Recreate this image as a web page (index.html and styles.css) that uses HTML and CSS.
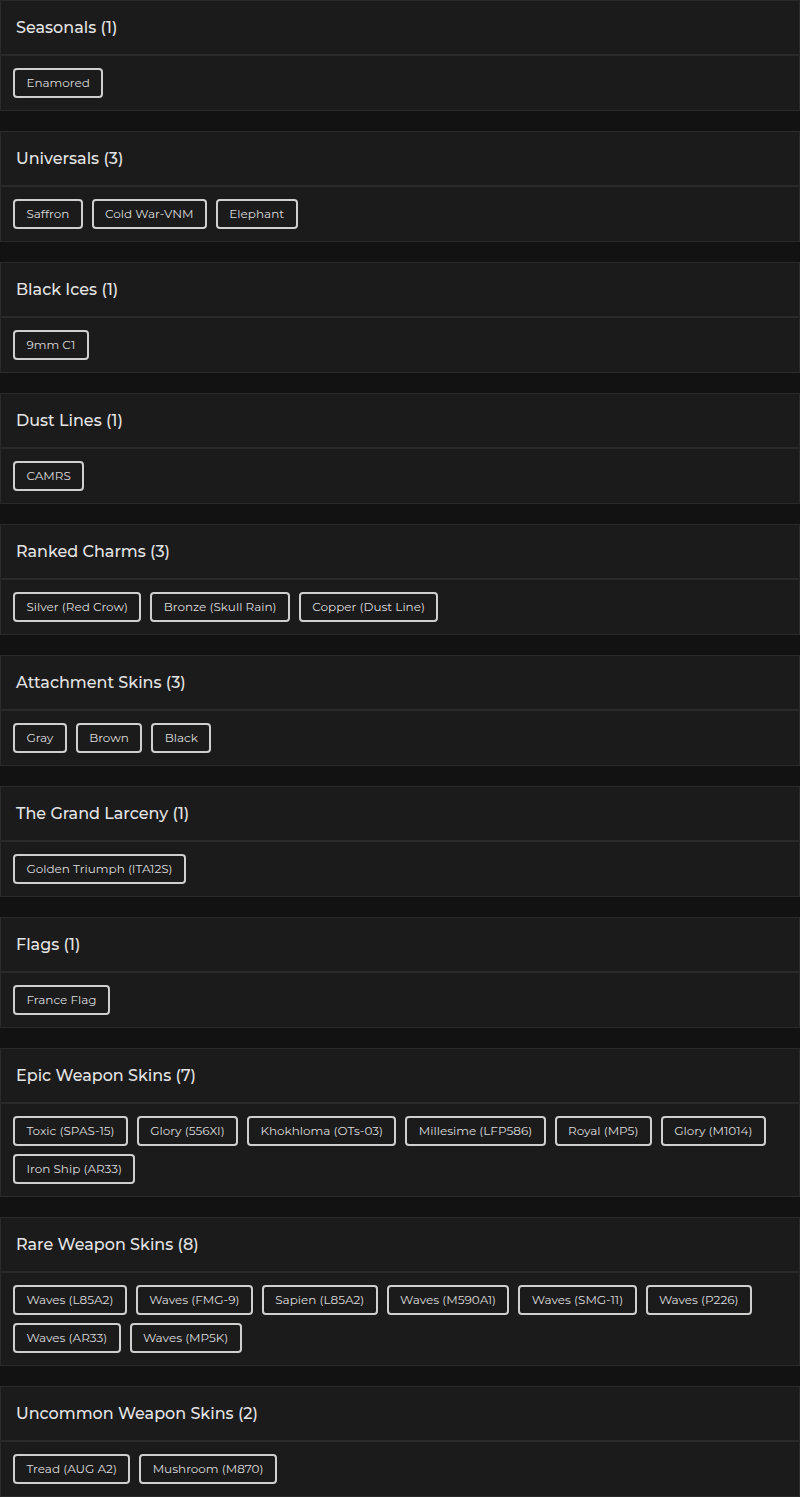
FILE: index.html
```html
<!DOCTYPE html>
<html>
<head>
<meta charset="utf-8">
<link rel="stylesheet" href="styles.css">
</head>
<body>
<div class="list">
  <section class="card">
    <h2 class="card-head">Seasonals (1)</h2>
    <div class="card-body">
      <span class="tag">Enamored</span>
    </div>
  </section>
  <section class="card">
    <h2 class="card-head">Universals (3)</h2>
    <div class="card-body">
      <span class="tag">Saffron</span>
      <span class="tag">Cold War-VNM</span>
      <span class="tag">Elephant</span>
    </div>
  </section>
  <section class="card">
    <h2 class="card-head">Black Ices (1)</h2>
    <div class="card-body">
      <span class="tag">9mm C1</span>
    </div>
  </section>
  <section class="card">
    <h2 class="card-head">Dust Lines (1)</h2>
    <div class="card-body">
      <span class="tag">CAMRS</span>
    </div>
  </section>
  <section class="card">
    <h2 class="card-head">Ranked Charms (3)</h2>
    <div class="card-body">
      <span class="tag">Silver (Red Crow)</span>
      <span class="tag">Bronze (Skull Rain)</span>
      <span class="tag">Copper (Dust Line)</span>
    </div>
  </section>
  <section class="card">
    <h2 class="card-head">Attachment Skins (3)</h2>
    <div class="card-body">
      <span class="tag">Gray</span>
      <span class="tag">Brown</span>
      <span class="tag">Black</span>
    </div>
  </section>
  <section class="card">
    <h2 class="card-head">The Grand Larceny (1)</h2>
    <div class="card-body">
      <span class="tag">Golden Triumph (ITA12S)</span>
    </div>
  </section>
  <section class="card">
    <h2 class="card-head">Flags (1)</h2>
    <div class="card-body">
      <span class="tag">France Flag</span>
    </div>
  </section>
  <section class="card">
    <h2 class="card-head">Epic Weapon Skins (7)</h2>
    <div class="card-body">
      <span class="tag">Toxic (SPAS-15)</span>
      <span class="tag">Glory (556XI)</span>
      <span class="tag">Khokhloma (OTs-03)</span>
      <span class="tag">Millesime (LFP586)</span>
      <span class="tag">Royal (MP5)</span>
      <span class="tag">Glory (M1014)</span>
      <span class="tag">Iron Ship (AR33)</span>
    </div>
  </section>
  <section class="card">
    <h2 class="card-head">Rare Weapon Skins (8)</h2>
    <div class="card-body">
      <span class="tag">Waves (L85A2)</span>
      <span class="tag">Waves (FMG-9)</span>
      <span class="tag">Sapien (L85A2)</span>
      <span class="tag">Waves (M590A1)</span>
      <span class="tag">Waves (SMG-11)</span>
      <span class="tag">Waves (P226)</span>
      <span class="tag">Waves (AR33)</span>
      <span class="tag">Waves (MP5K)</span>
    </div>
  </section>
  <section class="card">
    <h2 class="card-head">Uncommon Weapon Skins (2)</h2>
    <div class="card-body">
      <span class="tag">Tread (AUG A2)</span>
      <span class="tag">Mushroom (M870)</span>
    </div>
  </section>
</div>
</body>
</html>
```

FILE: styles.css
```css
html, body {
  margin: 0;
  padding: 0;
  background: #121212;
}
body {
  font-family: "Montserrat", "Open Sans", "DejaVu Sans", sans-serif;
  color: #e2e2e2;
}
.list {
  display: flex;
  flex-direction: column;
  gap: 20px;
}
.card {
  background: #1b1b1b;
  border: 1px solid #2a2a2a;
}
.card-head {
  margin: 0;
  height: 53px;
  display: flex;
  align-items: center;
  padding: 0 15px;
  font-size: 16px;
  font-weight: 500;
  color: #e4e4e4;
  border-bottom: 2px solid #2a2a2a;
}
.card-body {
  display: flex;
  flex-wrap: wrap;
  gap: 8px 9px;
  padding: 12px;
}
.tag {
  display: inline-block;
  height: 30px;
  box-sizing: border-box;
  padding: 0 11.4px;
  line-height: 26px;
  border: 2px solid #cfcfcf;
  border-radius: 4px;
  font-size: 12px;
  color: #dcdcdc;
  background: #1b1b1b;
}
```
